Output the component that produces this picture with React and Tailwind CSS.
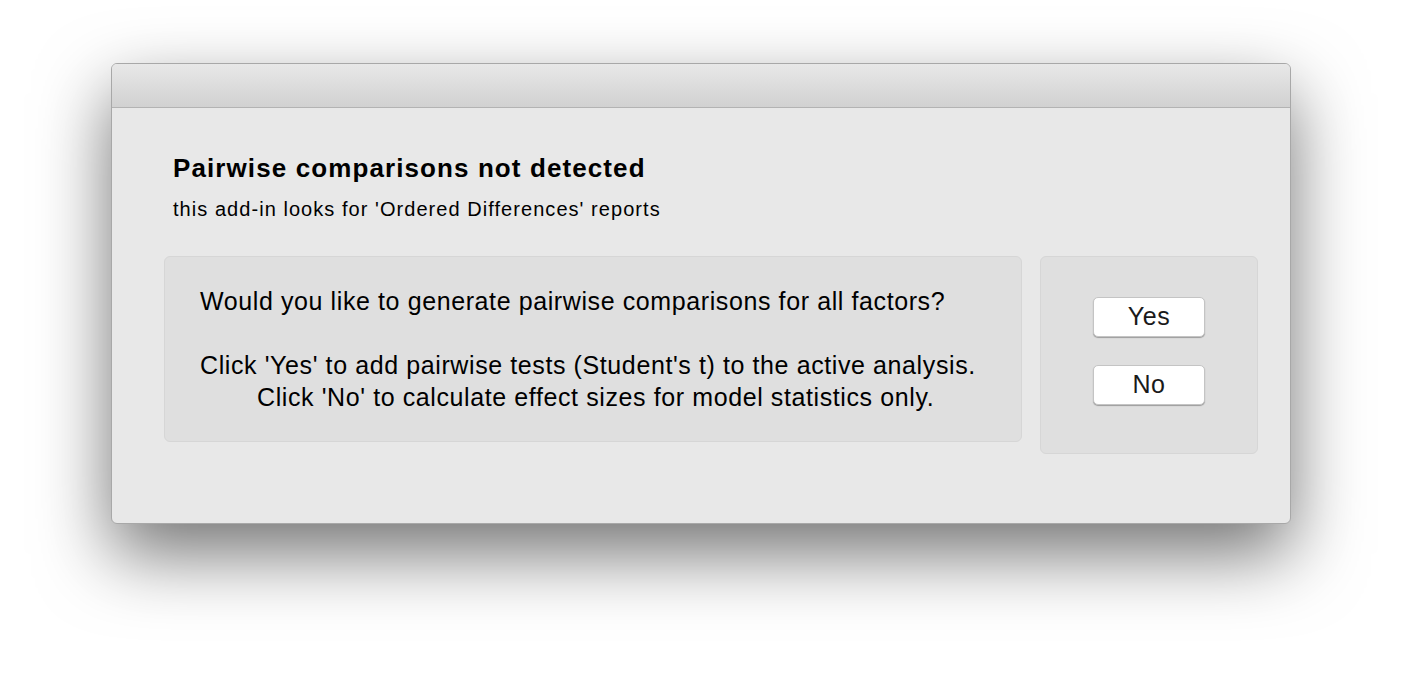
import React from 'react';

const App = () => {
  return (
    <div className="w-[1402px] h-[684px] bg-white pt-[63px] pl-[111px]" style={{ fontFamily: '"Liberation Sans", Arial, sans-serif' }}>
      <div className="w-[1180px] h-[461px] rounded-[6px] border border-[#a8a8a8] bg-[#e8e8e8] overflow-hidden shadow-[0_30px_72px_rgba(0,0,0,0.55)] flex flex-col">
        <div className="h-[44px] shrink-0 bg-gradient-to-b from-[#e8e8e8] to-[#d1d1d1] border-b border-[#b3b3b3]"></div>
        <div className="pl-[61px] pr-[32px] pt-[44px]">
          <h1 className="text-[26px] leading-[32px] tracking-[1.1px] font-bold text-black">Pairwise comparisons not detected</h1>
          <p className="text-[20px] leading-[24px] tracking-[1.05px] text-black mt-[13px]">this add-in looks for 'Ordered Differences' reports</p>
          <div className="flex items-start gap-[18px] mt-[35px] -ml-[9px]">
            <div className="w-[858px] h-[186px] rounded-[6px] border border-[#d6d6d6] bg-[#dfdfdf] pl-[35px] pt-[28px] text-[25px] leading-[32px] tracking-[0.6px] text-black">
              <p>Would you like to generate pairwise comparisons for all factors?</p>
              <p className="mt-[32px]">Click 'Yes' to add pairwise tests (Student's t) to the active analysis.</p>
              <p className="pl-[57px]">Click 'No' to calculate effect sizes for model statistics only.</p>
            </div>
            <div className="w-[218px] h-[198px] rounded-[6px] border border-[#d6d6d6] bg-[#dfdfdf] flex flex-col items-center pt-[40px] gap-[28px]">
              <button className="w-[112px] h-[40px] rounded-[5px] bg-white border border-[#c4c4c4] shadow-[0_1px_1px_rgba(0,0,0,0.3)] text-[25px] tracking-[0.5px] text-[#1a1a1a]">Yes</button>
              <button className="w-[112px] h-[40px] rounded-[5px] bg-white border border-[#c4c4c4] shadow-[0_1px_1px_rgba(0,0,0,0.3)] text-[25px] tracking-[0.5px] text-[#1a1a1a]">No</button>
            </div>
          </div>
        </div>
      </div>
    </div>
  );
};

export default App;
